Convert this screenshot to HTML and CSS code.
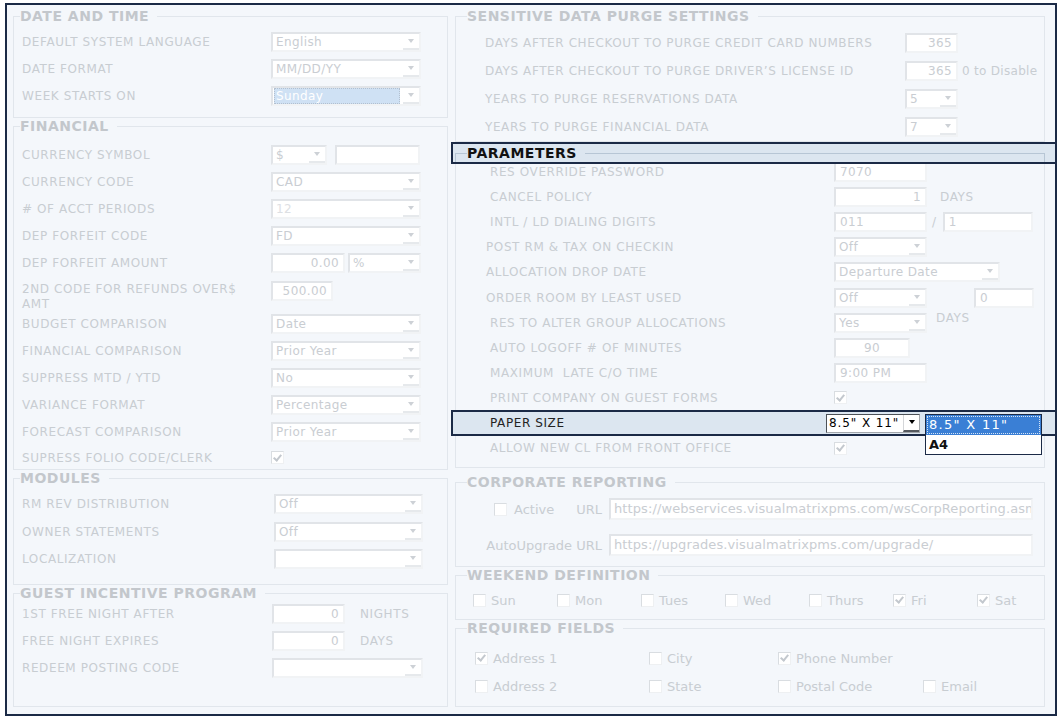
FILE: index.html
```html
<!DOCTYPE html>
<html lang="en">
<head>
  <meta charset="UTF-8">
  <title>Property Settings</title>
  <link rel="stylesheet" href="styles.css">
</head>
<body>
<div class="frame">

  <!-- left column -->
  <div class="col col-left">

    <div class="group dt">
      <div class="ghead"><i class="dash"></i><h2>DATE AND TIME</h2><i class="line"></i></div>
      <div class="gbody">
        <div class="row"><span class="lbl">DEFAULT SYSTEM LANGUAGE</span><span class="fld sel w150"><span class="v">English</span><i class="ar"></i></span></div>
        <div class="row"><span class="lbl">DATE FORMAT</span><span class="fld sel w150"><span class="v">MM/DD/YY</span><i class="ar"></i></span></div>
        <div class="row"><span class="lbl">WEEK STARTS ON</span><span class="fld sel w150"><span class="v pick">Sunday</span><i class="ar"></i></span></div>
      </div>
    </div>

    <div class="group fin">
      <div class="ghead"><i class="dash"></i><h2>FINANCIAL</h2><i class="line"></i></div>
      <div class="gbody">
        <div class="row"><span class="lbl">CURRENCY SYMBOL</span><span class="fld sel w56"><span class="v">$</span><i class="ar"></i></span><span class="fld w85 ml8"></span></div>
        <div class="row"><span class="lbl">CURRENCY CODE</span><span class="fld sel w150"><span class="v">CAD</span><i class="ar"></i></span></div>
        <div class="row"><span class="lbl">#&nbsp;OF ACCT PERIODS</span><span class="fld sel w150 dis"><span class="v">12</span><i class="ar"></i></span></div>
        <div class="row"><span class="lbl">DEP FORFEIT CODE</span><span class="fld sel w150"><span class="v">FD</span><i class="ar"></i></span></div>
        <div class="row"><span class="lbl">DEP FORFEIT AMOUNT</span><span class="fld w74 r">0.00</span><span class="fld sel w73 ml3"><span class="v">%</span><i class="ar"></i></span></div>
        <div class="row tall"><span class="lbl">2ND CODE FOR REFUNDS OVER$<br>AMT</span><span class="fld w62 r">500.00</span></div>
        <div class="row"><span class="lbl">BUDGET COMPARISON</span><span class="fld sel w150"><span class="v">Date</span><i class="ar"></i></span></div>
        <div class="row"><span class="lbl">FINANCIAL COMPARISON</span><span class="fld sel w150"><span class="v">Prior Year</span><i class="ar"></i></span></div>
        <div class="row"><span class="lbl">SUPPRESS MTD / YTD</span><span class="fld sel w150"><span class="v">No</span><i class="ar"></i></span></div>
        <div class="row"><span class="lbl">VARIANCE FORMAT</span><span class="fld sel w150"><span class="v">Percentage</span><i class="ar"></i></span></div>
        <div class="row"><span class="lbl">FORECAST COMPARISON</span><span class="fld sel w150"><span class="v">Prior Year</span><i class="ar"></i></span></div>
        <div class="row last"><span class="lbl">SUPRESS FOLIO CODE/CLERK</span><span class="cb on"></span></div>
      </div>
    </div>

    <div class="group mods">
      <div class="ghead"><i class="dash"></i><h2>MODULES</h2><i class="line"></i></div>
      <div class="gbody">
        <div class="row"><span class="lbl">RM REV DISTRIBUTION</span><span class="fld sel w149"><span class="v">Off</span><i class="ar"></i></span></div>
        <div class="row"><span class="lbl">OWNER STATEMENTS</span><span class="fld sel w149"><span class="v">Off</span><i class="ar"></i></span></div>
        <div class="row"><span class="lbl">LOCALIZATION</span><span class="fld sel w149"><span class="v"></span><i class="ar"></i></span></div>
      </div>
    </div>

    <div class="group gip">
      <div class="ghead"><i class="dash"></i><h2>GUEST INCENTIVE PROGRAM</h2><i class="line"></i></div>
      <div class="gbody">
        <div class="row"><span class="lbl">1ST FREE NIGHT AFTER</span><span class="fld w73 r">0</span><span class="unit ml15">NIGHTS</span></div>
        <div class="row"><span class="lbl">FREE NIGHT EXPIRES</span><span class="fld w73 r">0</span><span class="unit ml15">DAYS</span></div>
        <div class="row"><span class="lbl">REDEEM POSTING CODE</span><span class="fld sel w151"><span class="v"></span><i class="ar"></i></span></div>
      </div>
    </div>

  </div>

  <!-- right column -->
  <div class="col col-right">

    <div class="group sens">
      <div class="ghead"><i class="dash"></i><h2>SENSITIVE DATA PURGE SETTINGS</h2><i class="line"></i></div>
      <div class="gbody">
        <div class="row"><span class="lbl">DAYS AFTER CHECKOUT TO PURGE CREDIT CARD NUMBERS</span><span class="fld w53 r">365</span></div>
        <div class="row"><span class="lbl">DAYS AFTER CHECKOUT TO PURGE DRIVER’S LICENSE ID</span><span class="fld w53 r">365</span><span class="note ml4">0 to Disable</span></div>
        <div class="row"><span class="lbl">YEARS TO PURGE RESERVATIONS DATA</span><span class="fld sel w53"><span class="v">5</span><i class="ar"></i></span></div>
        <div class="row"><span class="lbl">YEARS TO PURGE FINANCIAL DATA</span><span class="fld sel w53"><span class="v">7</span><i class="ar"></i></span></div>
      </div>
    </div>

    <div class="group params">
      <div class="ghead hl"><i class="dash"></i><h2>PARAMETERS</h2><i class="line"></i></div>
      <div class="gbody">
        <div class="row"><span class="lbl">RES OVERRIDE PASSWORD</span><span class="fld w93 topdark">7070</span></div>
        <div class="row"><span class="lbl">CANCEL POLICY</span><span class="fld w93 r">1</span><span class="unit ml13">DAYS</span></div>
        <div class="row"><span class="lbl">INTL / LD DIALING DIGITS</span><span class="fld w93">011</span><span class="unit slash">/</span><span class="fld w90">1</span></div>
        <div class="row out"><span class="lbl">POST RM &amp; TAX ON CHECKIN</span><span class="fld sel w93"><span class="v">Off</span><i class="ar"></i></span></div>
        <div class="row out"><span class="lbl">ALLOCATION DROP DATE</span><span class="fld sel w166"><span class="v">Departure Date</span><i class="ar"></i></span></div>
        <div class="row out"><span class="lbl">ORDER ROOM BY LEAST USED</span><span class="fld sel w93"><span class="v">Off</span><i class="ar"></i></span><span class="fld w60 ml47">0</span></div>
        <div class="row"><span class="lbl">RES TO ALTER GROUP ALLOCATIONS</span><span class="fld sel w93"><span class="v">Yes</span><i class="ar"></i></span><span class="unit ml9 up">DAYS</span></div>
        <div class="row"><span class="lbl">AUTO LOGOFF # OF MINUTES</span><span class="fld w76 c">90</span></div>
        <div class="row"><span class="lbl">MAXIMUM&nbsp; LATE C/O TIME</span><span class="fld w93">9:00 PM</span></div>
        <div class="row"><span class="lbl">PRINT COMPANY ON GUEST FORMS</span><span class="cb on"></span></div>
        <div class="row paper">
          <span class="lbl">PAPER SIZE</span>
          <span class="fld sel dk"><span class="v">8.5" X 11"</span><i class="ar"></i></span>
          <div class="dd">
            <div class="opt-on">8.5" X 11"</div>
            <div class="opt-a4">A4</div>
          </div>
        </div>
        <div class="row"><span class="lbl">ALLOW NEW CL FROM FRONT OFFICE</span><span class="cb on"></span></div>
      </div>
    </div>

    <div class="group corp">
      <div class="ghead"><i class="dash"></i><h2>CORPORATE REPORTING</h2><i class="line"></i></div>
      <div class="gbody">
        <div class="row"><span class="cap"><span class="cb"></span><span class="txt ml7">Active</span><span class="txt ml22">URL</span></span><span class="fld url">https://webservices.visualmatrixpms.com/wsCorpReporting.asmx</span></div>
        <div class="row"><span class="cap"><span class="txt">AutoUpgrade URL</span></span><span class="fld url">https://upgrades.visualmatrixpms.com/upgrade/</span></div>
      </div>
    </div>

    <div class="group week">
      <div class="ghead"><i class="dash"></i><h2>WEEKEND DEFINITION</h2><i class="line"></i></div>
      <div class="gbody">
        <div class="days">
          <span class="opt"><span class="cb"></span>Sun</span>
          <span class="opt"><span class="cb"></span>Mon</span>
          <span class="opt"><span class="cb"></span>Tues</span>
          <span class="opt"><span class="cb"></span>Wed</span>
          <span class="opt"><span class="cb"></span>Thurs</span>
          <span class="opt"><span class="cb on"></span>Fri</span>
          <span class="opt"><span class="cb on"></span>Sat</span>
        </div>
      </div>
    </div>

    <div class="group req">
      <div class="ghead"><i class="dash"></i><h2>REQUIRED FIELDS</h2><i class="line"></i></div>
      <div class="gbody">
        <div class="fields">
          <span class="opt"><span class="cb on"></span>Address 1</span>
          <span class="opt"><span class="cb"></span>City</span>
          <span class="opt"><span class="cb on"></span>Phone Number</span>
          <span></span>
          <span class="opt"><span class="cb"></span>Address 2</span>
          <span class="opt"><span class="cb"></span>State</span>
          <span class="opt"><span class="cb"></span>Postal Code</span>
          <span class="opt"><span class="cb"></span>Email</span>
        </div>
      </div>
    </div>

  </div>
</div>
</body>
</html>
```

FILE: styles.css
```css
body {
  margin: 0;
  background: #fff;
  font-family: "DejaVu Sans", Verdana, sans-serif;
}
.frame {
  margin: 3px 0 0 5px;
  width: 1052px;
  height: 713px;
  box-sizing: border-box;
  border: 2px solid #1b2a46;
  background: #f4f7fb;
  padding: 3px 0 0 6px;
  display: flex;
  gap: 7px;
}
.col-left { width: 435px; flex: none; }
.col-right { width: 590px; flex: none; }

/* group boxes */
.ghead {
  display: flex;
  height: 16px;
}
.dash, .line {
  height: 8px;
  align-self: flex-end;
  box-sizing: border-box;
  border-top: 1px solid #e1e6ec;
}
.dash { width: 7px; flex: none; border-left: 1px solid #e1e6ec; }
.col-right .dash { width: 12px; }
.line { flex: 1; border-right: 1px solid #e1e6ec; }
h2 {
  margin: 0;
  padding: 0 8px 0 0;
  font-size: 14px;
  line-height: 16px;
  font-weight: bold;
  letter-spacing: .5px;
  color: #c3c7cc;
  white-space: nowrap;
}
.gbody {
  display: flow-root;
  border: 1px solid #e1e6ec;
  border-top: none;
  box-sizing: border-box;
}

.ghead.hl {
  height: 22px;
  margin: 0 -12px 0 -4px;
  padding: 0 10px 0 2px;
  border: 2px solid #1b2a46;
  background: #dce6f0;
  box-sizing: border-box;
  position: relative;
  z-index: 1;
}
.hl h2 { color: #111; line-height: 18px; }
.hl .dash, .hl .line { height: 9px; border-color: #b7c6d5; }

/* rows */
.row {
  display: flex;
  align-items: center;
  height: 27px;
}
.lbl {
  flex: none;
  font-size: 12px;
  letter-spacing: .6px;
  color: #c8cdd2;
  white-space: nowrap;
}
.unit {
  font-size: 12px;
  letter-spacing: .6px;
  color: #c8cdd2;
}
.note {
  font-size: 12px;
  letter-spacing: .3px;
  color: #c8cdd2;
}

/* left groups */
.dt .gbody { height: 94px; padding: 4px 0 0 8px; }
.fin .gbody { height: 336px; padding: 7.5px 0 0 8px; }
.mods .gbody { height: 99px; padding: 4.5px 0 0 8px; }
.gip .gbody { height: 106px; padding: 0 0 0 8px; display: flex; flex-direction: column; gap: 2px; }
.col-left .lbl { width: 249px; }
.mods .lbl { width: 252px; }
.gip .lbl { width: 250px; }
.mods .row { height: 27.5px; }
.gip .row { height: 25px; flex: none; }
.fin .row.tall { height: 34px; align-items: flex-start; padding-top: 4px; box-sizing: border-box; }
.tall .lbl { line-height: 15px; margin-top: 1px; }
.fin .row.last { height: 24px; }

/* right groups */
.sens .gbody { height: 118px; padding: 5px 0 0 29px; }
.sens .row { height: 28px; }
.sens .lbl { width: 420px; }
.params .gbody { height: 304px; padding: 0 0 0 34px; }
.params .row { height: 25.1px; }
.params .row:first-child { margin-top: -4.5px; }
.params .lbl { width: 344px; }
.params .out { margin-left: -4px; }
.params .out .lbl { width: 348px; }
.corp { margin-top: 6px; }
.corp .gbody { height: 77px; padding: 4px 0 0 10px; }
.corp .row { height: 30px; }
.corp .row + .row { margin-top: 6px; }
.week .gbody { height: 37px; padding: 4px 0 0 17px; }
.req .gbody { height: 71px; padding: 8px 0 0 19px; }

/* inputs */
.fld {
  flex: none;
  height: 20px;
  box-sizing: border-box;
  background: #fff;
  border: 2px solid;
  border-color: #e1e4e8 #f1f3f5 #f1f3f5 #e1e4e8;
  font-size: 12px;
  letter-spacing: .4px;
  line-height: 16px;
  color: #c9cdd2;
  padding: 0 4px;
  white-space: nowrap;
  overflow: hidden;
}
.fld.r { text-align: right; }
.fld.c { text-align: center; }
.fld.topdark { border-top-color: #cfd3d8; }
.sel {
  display: flex;
  padding: 0 0 0 3px;
}
.sel .v {
  flex: 1;
  overflow: hidden;
}
.sel .ar {
  width: 16px;
  flex: none;
  display: flex;
  align-items: center;
  justify-content: center;
  border-bottom: 2px solid #e6e9ec;
}
.sel .ar::after {
  content: "";
  border-left: 3.5px solid transparent;
  border-right: 3.5px solid transparent;
  border-top: 4px solid #cdd1d6;
}
.sel.dis .v { color: #dde0e4; }
.sel .pick {
  background: #cfe1f4;
  color: #fff;
  outline: 1px dotted #b3c0cf;
  outline-offset: -1px;
  margin: 0 3px 0 -2px;
  padding-left: 2px;
}

.w53 { width: 53px; }
.w56 { width: 56px; }
.w60 { width: 60px; }
.w62 { width: 62px; }
.w73 { width: 73px; }
.w74 { width: 74px; }
.w76 { width: 76px; }
.w85 { width: 85px; }
.w90 { width: 90px; }
.w93 { width: 93px; }
.w149 { width: 149px; }
.w150 { width: 150px; }
.w151 { width: 151px; }
.w166 { width: 166px; }
.ml3 { margin-left: 3px; }
.ml4 { margin-left: 4px; }
.ml7 { margin-left: 7px; }
.ml8 { margin-left: 8px; }
.ml9 { margin-left: 9px; }
.ml13 { margin-left: 13px; }
.ml15 { margin-left: 15px; }
.ml22 { margin-left: 22px; }
.ml47 { margin-left: 47px; }
.slash { margin: 0 6px 0 5px; }
.up { align-self: flex-start; margin-top: 1px; }

/* checkboxes */
.cb {
  width: 13px;
  height: 13px;
  box-sizing: border-box;
  border: 1px solid;
  border-color: #d9dde1 #eef0f2 #eef0f2 #d9dde1;
  background: #fff;
  display: inline-flex;
  align-items: center;
  justify-content: center;
  flex: none;
}
.cb.on::after {
  content: "";
  width: 3px;
  height: 6px;
  margin-top: -2px;
  border: solid #c3c8ce;
  border-width: 0 2px 2px 0;
  transform: rotate(40deg);
}

/* paper size row (highlighted) */
.params .row.paper {
  height: 26px;
  margin: 0 -13px -0.9px -39px;
  padding-left: 37px;
  border: 2px solid #1b2a46;
  background: #dce6f0;
  box-sizing: border-box;
  position: relative;
}
.paper .lbl { width: 336px; color: #222; }
.sel.dk {
  width: 94px;
  height: 19px;
  border: 1px solid;
  border-color: #4c5157 #a3a7ac #a3a7ac #4c5157;
  color: #000;
  letter-spacing: .9px;
  padding-left: 2px;
}
.dk .ar {
  border-bottom: 2px solid #55595e;
  border-left: 1px solid #d4d6d9;
  width: 15px;
}
.dk .ar::after { border-top-color: #000; }
.dd {
  position: absolute;
  left: 472px;
  top: 2px;
  width: 117px;
  box-sizing: border-box;
  border: 1px solid #1b2a46;
  background: #fff;
}
.dd div {
  font-size: 13px;
  line-height: 19px;
  padding-left: 3px;
  white-space: nowrap;
}
.dd .opt-on {
  height: 20px;
  background: #3a7fd5;
  color: #fff;
  letter-spacing: 1.3px;
  outline: 1px dotted #d6e4f5;
  outline-offset: -2px;
}
.dd .opt-a4 {
  font-weight: bold;
  color: #111;
}

/* corporate, weekend, required */
.cap {
  width: 136px;
  flex: none;
  display: flex;
  justify-content: flex-end;
  align-items: center;
}
.txt, .opt {
  font-size: 13px;
  color: #c8cdd2;
}
.fld.url {
  width: 424px;
  height: 22px;
  margin-left: 7px;
  font-size: 13px;
  letter-spacing: .1px;
  line-height: 18px;
  padding-left: 3px;
}
.days {
  display: grid;
  grid-template-columns: repeat(6, 84px) auto;
  height: 26px;
  align-items: center;
}
.fields {
  display: grid;
  grid-template-columns: 174px 129px 145px auto;
  grid-auto-rows: 28px;
  align-items: center;
}
.opt {
  display: flex;
  align-items: center;
  gap: 5px;
}
```
